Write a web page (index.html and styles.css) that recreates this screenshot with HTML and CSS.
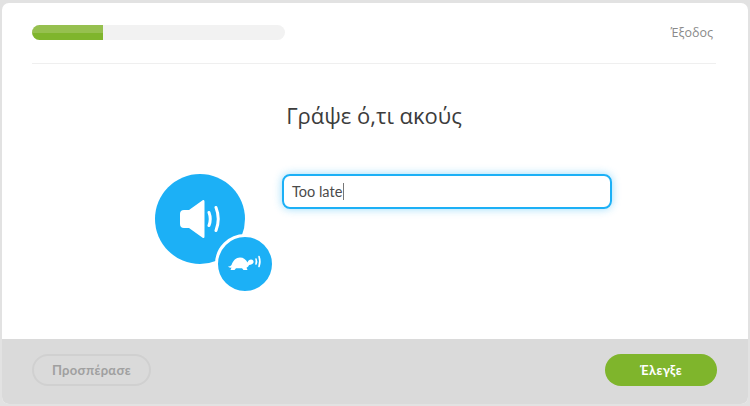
FILE: index.html
```html
<!DOCTYPE html>
<html lang="el">
<head>
    <meta charset="UTF-8">
    <meta name="viewport" content="width=device-width, initial-scale=1.0">
    <title>Γράψε ό,τι ακούς</title>
    <link rel="stylesheet" href="styles.css">
</head>
<body>
    <div class="card">
        <div class="content">
            <div class="top-bar">
                <div class="progress">
                    <div class="progress-fill"></div>
                </div>
                <a class="quit" href="#">Έξοδος</a>
            </div>

            <h1>Γράψε ό,τι ακούς</h1>

            <div class="challenge">
                <div class="speakers">
                    <button class="speaker" type="button" aria-label="Άκου">
                        <svg width="44" height="40" viewBox="0 0 44 40">
                            <path fill="#fff" d="M6 11h5L25 1q1.500-.5 1.500 1.500v35q0 2-1.500 1.500L11 29H6q-4 0-4-4V15q0-4 4-4z"/>
                            <path fill="none" stroke="#fff" stroke-width="3" stroke-linecap="round" d="M31 13.500q2.500 6.500 0 13M38 8.500q4.500 11.500 0 23"/>
                        </svg>
                    </button>
                    <button class="speaker-slow" type="button" aria-label="Άκου αργά">
                        <svg width="36" height="20" viewBox="0 0 36 20">
                            <path fill="#fff" d="M1 12.500q2.500 0 3.500-1.500C6 6.500 9 3.500 13 3.500c3.500 0 6 2 7.500 5 .5-2 2-3 3.500-3 2 0 3 1.500 2.500 3-.5 1.800-2.500 2.300-4.500 2.500-.5 1.500-1.500 2.200-2.500 2.800l1 2.200h-4l-1.500-1.700H9L7.500 16h-4l1-2.500q-2.500.5-3.500-1z"/>
                            <path fill="none" stroke="#fff" stroke-width="1.600" stroke-linecap="round" d="M29 5q1 2.500 0 5M32 2.500q1.800 5 0 10"/>
                        </svg>
                    </button>
                </div>
                <div class="answer-input">Too late<span class="caret"></span></div>
            </div>
        </div>

        <div class="footer">
            <button class="btn btn-skip" type="button">Προσπέρασε</button>
            <button class="btn btn-check" type="button">Έλεγξε</button>
        </div>
    </div>
</body>
</html>
```

FILE: styles.css
```css
* {
    box-sizing: border-box;
}

html, body {
    height: 100%;
}

body {
    margin: 0;
    padding: 3px 2px 2px;
    background-color: #e2e2e2;
    font-family: "Open Sans", "Noto Sans", sans-serif;
    overflow: hidden;
}

.card {
    height: 401px;
    display: flex;
    flex-direction: column;
    background-color: #ffffff;
    border-radius: 7px;
    overflow: hidden;
}

.content {
    flex: 1;
    padding: 22px 32px 0 30px;
}

.top-bar {
    display: flex;
    justify-content: space-between;
    align-items: flex-start;
    height: 39px;
    border-bottom: 1px solid #efefef;
}

.progress {
    width: 253px;
    height: 15px;
    background-color: #f2f2f2;
    border-radius: 8px;
}

.progress-fill {
    width: 71px;
    height: 15px;
    border-radius: 8px 0 0 8px;
    background: linear-gradient(#96c04f 0, #96c04f 8px, #7fb52c 8px);
}

.quit {
    margin-right: 3px;
    color: #8a8a8a;
    font-size: 12.500px;
    line-height: 15px;
    text-decoration: none;
}

h1 {
    margin: 35px 0 0 0;
    color: #3c3c3c;
    font-size: 22px;
    font-weight: 400;
    line-height: 33px;
    text-align: center;
}

.challenge {
    display: flex;
    align-items: flex-start;
    margin-top: 42px;
    padding-left: 123px;
}

.speakers {
    position: relative;
    width: 127px;
    height: 117px;
}

.speaker {
    display: flex;
    align-items: center;
    justify-content: center;
    width: 90px;
    height: 90px;
    padding: 0;
    border: none;
    border-radius: 50%;
    background-color: #1cb0f6;
}

/* lezi pres velky kruh */
.speaker-slow {
    position: absolute;
    left: 60px;
    top: 60px;
    display: flex;
    align-items: center;
    justify-content: center;
    width: 60px;
    height: 60px;
    padding: 0;
    border: 3px solid #ffffff;
    border-radius: 50%;
    background-color: #1cb0f6;
}

.answer-input {
    display: flex;
    align-items: center;
    width: 330px;
    height: 35px;
    padding: 0 8px;
    border: 2px solid #1cb0f6;
    border-radius: 8px;
    box-shadow: 0 0 8px rgba(28, 176, 246, 0.45);
    color: #4b4b4b;
    font-family: "Lato", sans-serif;
    font-size: 14.500px;
    font-weight: 400;
}

.caret {
    width: 1px;
    height: 17px;
    margin-left: 1px;
    background-color: #777777;
}

.footer {
    display: flex;
    justify-content: space-between;
    align-items: flex-start;
    height: 65px;
    padding: 15px 31px 0 30px;
    background-color: #dadada;
}

.btn {
    height: 32px;
    border-radius: 16px;
    font-family: "Lato", sans-serif;
    font-size: 13px;
    font-weight: 700;
    letter-spacing: 0.3px;
}

.btn-skip {
    width: 119px;
    border: 2px solid #d0d0d0;
    background-color: transparent;
    color: #a0a0a0;
}

.btn-check {
    width: 112px;
    border: none;
    background-color: #7fb52c;
    color: #ffffff;
}
```
